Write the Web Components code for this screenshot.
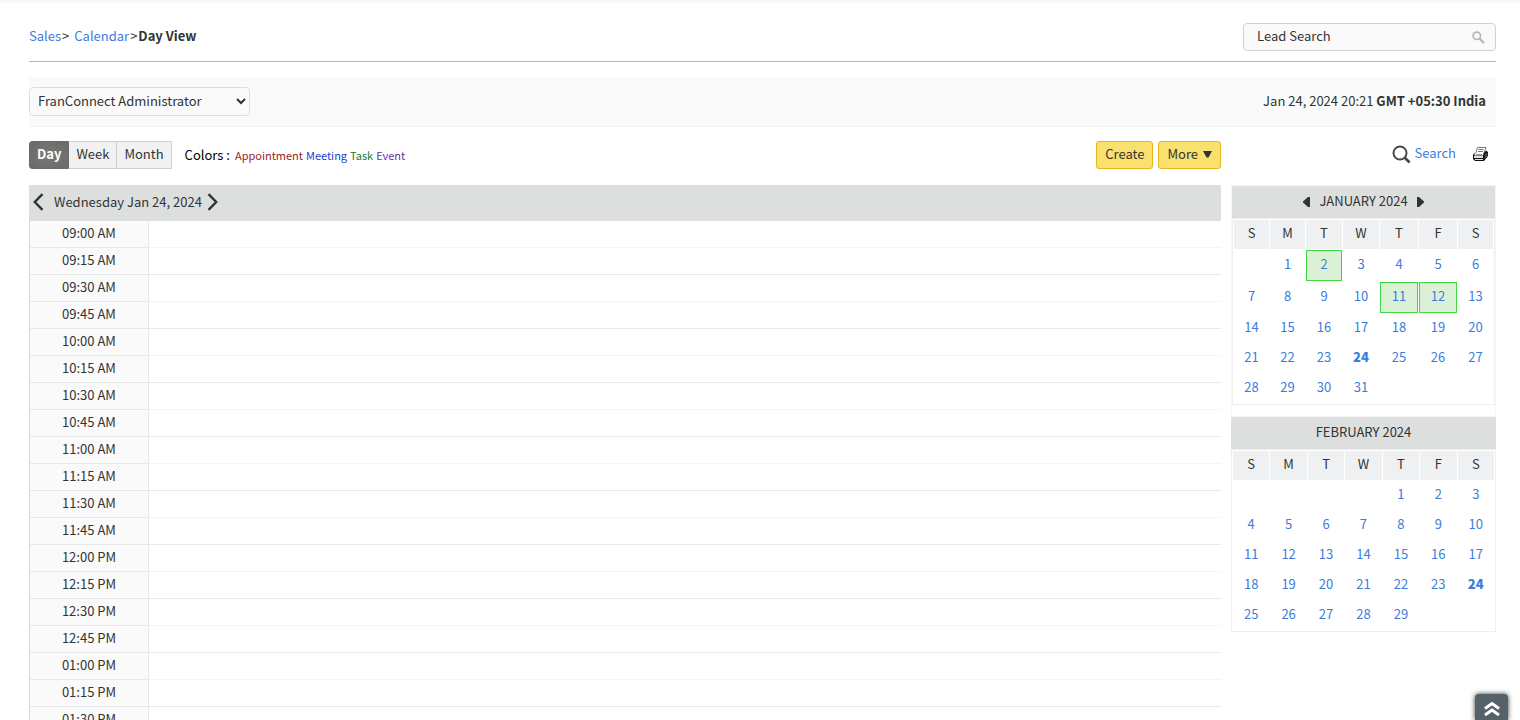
<!DOCTYPE html>
<html lang="en">
<head>
<meta charset="utf-8">
<title>Calendar - Day View</title>
<style>
body {
    margin: 0;
    background: #fff;
    color: #313435;
    font: 13px/20px "Noto Sans CJK SC", "Open Sans", sans-serif;
    --link: #3b7ddd;
    --bar: #dddfde;
    --line: #e8e8e8;
}
</style>
</head>
<body>
<calendar-page>
    <page-header slot="header">
        <bread-crumb></bread-crumb>
        <lead-search slot="end"></lead-search>
    </page-header>
    <user-bar slot="userbar">Jan 24, 2024 20:21 <b>GMT +05:30 India</b></user-bar>
    <view-toolbar slot="toolbar"></view-toolbar>
    <side-tools slot="tools"></side-tools>
    <day-grid slot="main" start="540" end="810">Wednesday Jan 24, 2024</day-grid>
    <month-card slot="side" first="1" days="31" today="24" busy="2,11,12" nav>JANUARY 2024</month-card>
    <month-card slot="side" first="4" days="29" today="24">FEBRUARY 2024</month-card>
</calendar-page>

<script>
//attach an open shadow root and fill it
function setShadow(el, html) {
    el.attachShadow({ mode: 'open' }).innerHTML = html;
    return el.shadowRoot;
}

customElements.define('calendar-page',
    class extends HTMLElement {
        constructor() {
            super();
            setShadow(this, `
            <style>
            :host {
                display: block;
                position: relative;
                box-sizing: border-box;
                height: 100vh;
                overflow: hidden;
                padding: 0 24px 0 29px;
                background: linear-gradient(#f5f5f5, #fff) 0 0 / 100% 4px no-repeat;
            }
            .body {
                display: grid;
                grid-template-columns: minmax(0, 1fr) 265px;
                column-gap: 10px;
                row-gap: 16px;
                margin-top: 14px;
                align-items: start;
            }
            </style>
            <slot name="header"></slot>
            <slot name="userbar"></slot>
            <div class="body">
                <slot name="toolbar"></slot>
                <slot name="tools"></slot>
                <slot name="main"></slot>
                <aside><slot name="side"></slot></aside>
            </div>
            <back-to-top></back-to-top>
            `);
        }
    }
);

customElements.define('page-header',
    class extends HTMLElement {
        constructor() {
            super();
            setShadow(this, `
            <style>
            :host {
                display: flex;
                justify-content: space-between;
                align-items: center;
                padding: 23px 0 10px;
                border-bottom: 1px solid #b5b5b5;
            }
            </style>
            <slot></slot>
            <slot name="end"></slot>
            `);
        }
    }
);

customElements.define('bread-crumb',
    class extends HTMLElement {
        constructor() {
            super();
            setShadow(this, `
            <style>
            :host { display: block; padding-bottom: 2px; }
            nav { display: flex; gap: 1px; }
            a { color: var(--link); text-decoration: none; }
            .sep { margin-right: 4px; }
            </style>
            <nav aria-label="Breadcrumb">
                <a href="#">Sales</a><span class="sep">&gt;</span>
                <a href="#">Calendar</a><span>&gt;</span>
                <b>Day View</b>
            </nav>
            `);
        }
    }
);

customElements.define('lead-search',
    class extends HTMLElement {
        constructor() {
            super();
            setShadow(this, `
            <style>
            :host {
                display: flex;
                align-items: center;
                box-sizing: border-box;
                width: 253px;
                height: 28px;
                padding: 0 10px 0 13px;
                border: 1px solid #d2d2d2;
                border-radius: 4px;
                background: #fafafa;
            }
            input {
                flex: 1;
                min-width: 0;
                padding: 0 0 2px;
                border: 0;
                outline: 0;
                background: none;
                color: inherit;
                font: inherit;
            }
            input::placeholder { color: #313435; opacity: 1; }
            button { display: flex; padding: 0; border: 0; background: none; }
            </style>
            <input type="text" placeholder="Lead Search" aria-label="Lead Search">
            <button type="button" aria-label="Go">
                <svg width="13" height="13" viewBox="0 0 13 13" fill="none" stroke="#b5b5b5">
                    <circle cx="4.8" cy="4.8" r="3.7" stroke-width="1.6"/>
                    <path d="M7.8 7.8L12 12" stroke-width="2.2"/>
                </svg>
            </button>
            `);
        }
    }
);

customElements.define('user-bar',
    class extends HTMLElement {
        constructor() {
            super();
            setShadow(this, `
            <style>
            :host {
                display: flex;
                justify-content: space-between;
                align-items: center;
                margin-top: 15px;
                padding: 10px 10px 10px 0;
                background: #fafafa;
                border-bottom: 1px solid #f2f2f2;
            }
            select {
                width: 221px;
                height: 29px;
                padding: 0 4px 2px;
                border: 1px solid #dedede;
                border-radius: 4px;
                background-color: #fafafa;
                color: inherit;
                font: inherit;
            }
            span { padding-bottom: 2px; }
            </style>
            <select aria-label="User"><option>FranConnect Administrator</option></select>
            <span><slot></slot></span>
            `);
        }
    }
);

customElements.define('view-toolbar',
    class extends HTMLElement {
        constructor() {
            super();
            setShadow(this, `
            <style>
            :host { display: flex; align-items: center; height: 28px; }
            button {
                box-sizing: border-box;
                height: 28px;
                padding: 0 8px 2px;
                color: inherit;
                font: inherit;
            }
            .views { display: flex; }
            .views button {
                padding: 0 7px 2px;
                border: 1px solid #cfcfcf;
                border-left-width: 0;
                background: #f1f1f1;
            }
            .views .on {
                border-color: #6d6a6a;
                border-left-width: 1px;
                border-radius: 3px 0 0 3px;
                background: radial-gradient(#7b7878, #6b6868);
                color: #fff;
                font-weight: bold;
            }
            .legend {
                display: flex;
                align-items: baseline;
                gap: 3px;
                margin-left: 13px;
                font-size: 11px;
            }
            .legend b { margin-right: 2px; font-size: 13px; font-weight: normal; color: #000; }
            .actions { display: flex; gap: 5px; margin-left: auto; }
            .actions button {
                border: 1px solid #e4b81c;
                border-radius: 3px;
                background: #fae16f;
            }
            .actions .more { display: flex; align-items: center; gap: 5px; }
            </style>
            <div class="views">
                <button type="button" class="on">Day</button>
                <button type="button">Week</button>
                <button type="button">Month</button>
            </div>
            <div class="legend">
                <b>Colors :</b>
                <span style="color:#9b1c20">Appointment</span>
                <span style="color:#1a3bd0">Meeting</span>
                <span style="color:#1b7a3c">Task</span>
                <span style="color:#6a2fa5">Event</span>
            </div>
            <div class="actions">
                <button type="button">Create</button>
                <button type="button" class="more">More
                    <svg width="9" height="7" viewBox="0 0 9 7"><path d="M0 0H9L5.5 6.5H3.5Z" fill="#313435"/></svg>
                </button>
            </div>
            `);
        }
    }
);

customElements.define('side-tools',
    class extends HTMLElement {
        constructor() {
            super();
            setShadow(this, `
            <style>
            :host {
                display: flex;
                justify-content: flex-end;
                align-items: center;
                height: 26px;
                padding-right: 7px;
                gap: 16px;
            }
            a { display: flex; align-items: center; gap: 4px; color: var(--link); text-decoration: none; }
            a span { padding-bottom: 2px; }
            button { display: flex; padding: 0; border: 0; background: none; }
            </style>
            <a href="#">
                <svg width="19" height="19" viewBox="0 0 19 19" fill="none" stroke="#4a4a4a">
                    <circle cx="8" cy="8" r="6.5" stroke-width="2"/>
                    <path d="M12.6 12.6L17.6 17.6" stroke-width="2.8"/>
                </svg>
                <span>Search</span>
            </a>
            <button type="button" aria-label="Print">
                <svg width="17" height="15" viewBox="0 0 17 15">
                    <path d="M5.5 .5H14L11.5 7H3.5Z" fill="#fff" stroke="#777"/>
                    <path d="M6.5 2.5H11.5M6 4.5H11" stroke="#777"/>
                    <path d="M1 7.5L3 6H12L14 3.5L16 5V9L12 14H3L1 12Z" fill="#111"/>
                    <path d="M3.5 6H11.5L11 8.5H2Z" fill="#fff"/>
                    <path d="M4 7.5H10" stroke="#999"/>
                    <path d="M2 9H11V11H2ZM3 12H11V13H3Z" fill="#ddd"/>
                    <path d="M13 8.5L15 6.5M13 10.5L15 8.5" stroke="#999"/>
                </svg>
            </button>
            `);
        }
    }
);

customElements.define('day-grid',
    class extends HTMLElement {
        constructor() {
            super();
            setShadow(this, `
            <style>
            :host { display: block; }
            header {
                display: flex;
                align-items: center;
                height: 36px;
                padding-left: 4px;
                background: var(--bar);
            }
            header span { padding: 0 5px 2px 10px; }
            button { display: flex; padding: 0 0 2px; border: 0; background: none; }
            table {
                width: 100%;
                table-layout: fixed;
                border-collapse: separate;
                border-spacing: 0;
                border-left: 1px solid #dcdcdc;
            }
            th, td { box-sizing: border-box; height: 27px; padding: 0 0 2px; border-bottom: 1px solid var(--line); }
            th {
                width: 119px;
                border-right: 1px solid var(--line);
                background: #fafafa;
                font-weight: normal;
            }
            tr:nth-child(odd) td { border-bottom-color: #f5f5f5; }
            </style>
            <header>
                <button type="button" aria-label="Previous day">
                    <svg width="11" height="18" viewBox="0 0 11 18" fill="none" stroke="#313435" stroke-width="2.4"><path d="M9.5 1.2L1.8 9L9.5 16.8"/></svg>
                </button>
                <span><slot></slot></span>
                <button type="button" aria-label="Next day">
                    <svg width="11" height="18" viewBox="0 0 11 18" fill="none" stroke="#313435" stroke-width="2.4"><path d="M1.5 1.2L9.2 9L1.5 16.8"/></svg>
                </button>
            </header>
            <table><tbody>${this.getRows()}</tbody></table>
            `);
        }

        //start and end are minutes after midnight, one row per quarter hour
        getRows() {
            const start = Number(this.getAttribute('start'));
            const end = Number(this.getAttribute('end'));
            let rows = '';
            for (let m = start; m <= end; m += 15) {
                const hour = String(Math.floor(m / 60 + 11) % 12 + 1).padStart(2, '0');
                const minute = String(m % 60).padStart(2, '0');
                rows += `<tr><th scope="row">${hour}:${minute} ${m < 720 ? 'AM' : 'PM'}</th><td></td></tr>`;
            }
            return rows;
        }
    }
);

customElements.define('month-card',
    class extends HTMLElement {
        constructor() {
            super();
            this.first = Number(this.getAttribute('first'));
            this.days = Number(this.getAttribute('days'));
            this.today = Number(this.getAttribute('today'));
            this.busy = (this.getAttribute('busy') || '').split(',').map(Number);
            const nav = this.hasAttribute('nav');

            setShadow(this, `
            <style>
            :host { display: block; }
            :host([nav]) { padding-bottom: 11px; border: 1px solid #f6f6f6; }
            header {
                display: flex;
                justify-content: center;
                align-items: center;
                gap: 8px;
                height: 32px;
                background: var(--bar);
            }
            header span { padding-bottom: 2px; }
            header button { display: flex; padding: 0; border: 0; background: none; }
            table {
                width: 100%;
                table-layout: fixed;
                border-collapse: separate;
                border-spacing: 1px;
                border: 1px solid #eee;
            }
            th, td { height: 26px; padding: 0 0 3px; text-align: center; }
            th { background: #eff0f2; font-weight: normal; }
            a { color: var(--link); text-decoration: none; }
            .busy { border: 1px solid #43d843; background: #dbf1d5; }
            .today { font-weight: 900; }
            </style>
            <header>
                ${nav ? '<button type="button" aria-label="Previous month"><svg width="8" height="10" viewBox="0 0 8 10"><path d="M7 0V10H5L0 5.5V4.5L5 0Z" fill="#313435"/></svg></button>' : ''}
                <span><slot></slot></span>
                ${nav ? '<button type="button" aria-label="Next month"><svg width="8" height="10" viewBox="0 0 8 10"><path d="M1 0V10H3L8 5.5V4.5L3 0Z" fill="#313435"/></svg></button>' : ''}
            </header>
            <table>
                ${nav ? this.getColumns([35, 35, 36, 36, 38, 38]) : ''}
                <thead><tr>${[...'SMTWTFS'].map((d) => `<th scope="col">${d}</th>`).join('')}</tr></thead>
                <tbody>${this.getWeeks()}</tbody>
            </table>
            `);
        }

        getColumns(widths) {
            return '<colgroup>' + widths.map((w) => `<col style="width:${w}px">`).join('') + '<col></colgroup>';
        }

        getWeeks() {
            let html = '';
            for (let day = 1 - this.first; day <= this.days; day += 7) {
                html += '<tr>';
                for (let d = day; d < day + 7; d++) {
                    html += d < 1 || d > this.days ? '<td></td>' : this.getDay(d);
                }
                html += '</tr>';
            }
            return html;
        }

        getDay(d) {
            const names = [];
            if (this.busy.includes(d)) names.push('busy');
            if (d === this.today) names.push('today');
            return `<td class="${names.join(' ')}"><a href="#">${d}</a></td>`;
        }
    }
);

customElements.define('back-to-top',
    class extends HTMLElement {
        constructor() {
            super();
            setShadow(this, `
            <style>
            :host { position: absolute; right: 12px; bottom: 0; }
            button {
                display: flex;
                justify-content: center;
                width: 33px;
                height: 26px;
                padding: 7px 0 0;
                border: 0;
                border-radius: 4px 4px 0 0;
                background: #566269;
                box-shadow: 0 0 5px #333;
            }
            </style>
            <button type="button" aria-label="Back to top">
                <svg width="16" height="16" viewBox="0 0 16 16" fill="none" stroke="#fff" stroke-width="3"><path d="M1 7.5L8 2.5L15 7.5M1 14L8 9L15 14"/></svg>
            </button>
            `);
        }
    }
);
</script>
</body>
</html>
